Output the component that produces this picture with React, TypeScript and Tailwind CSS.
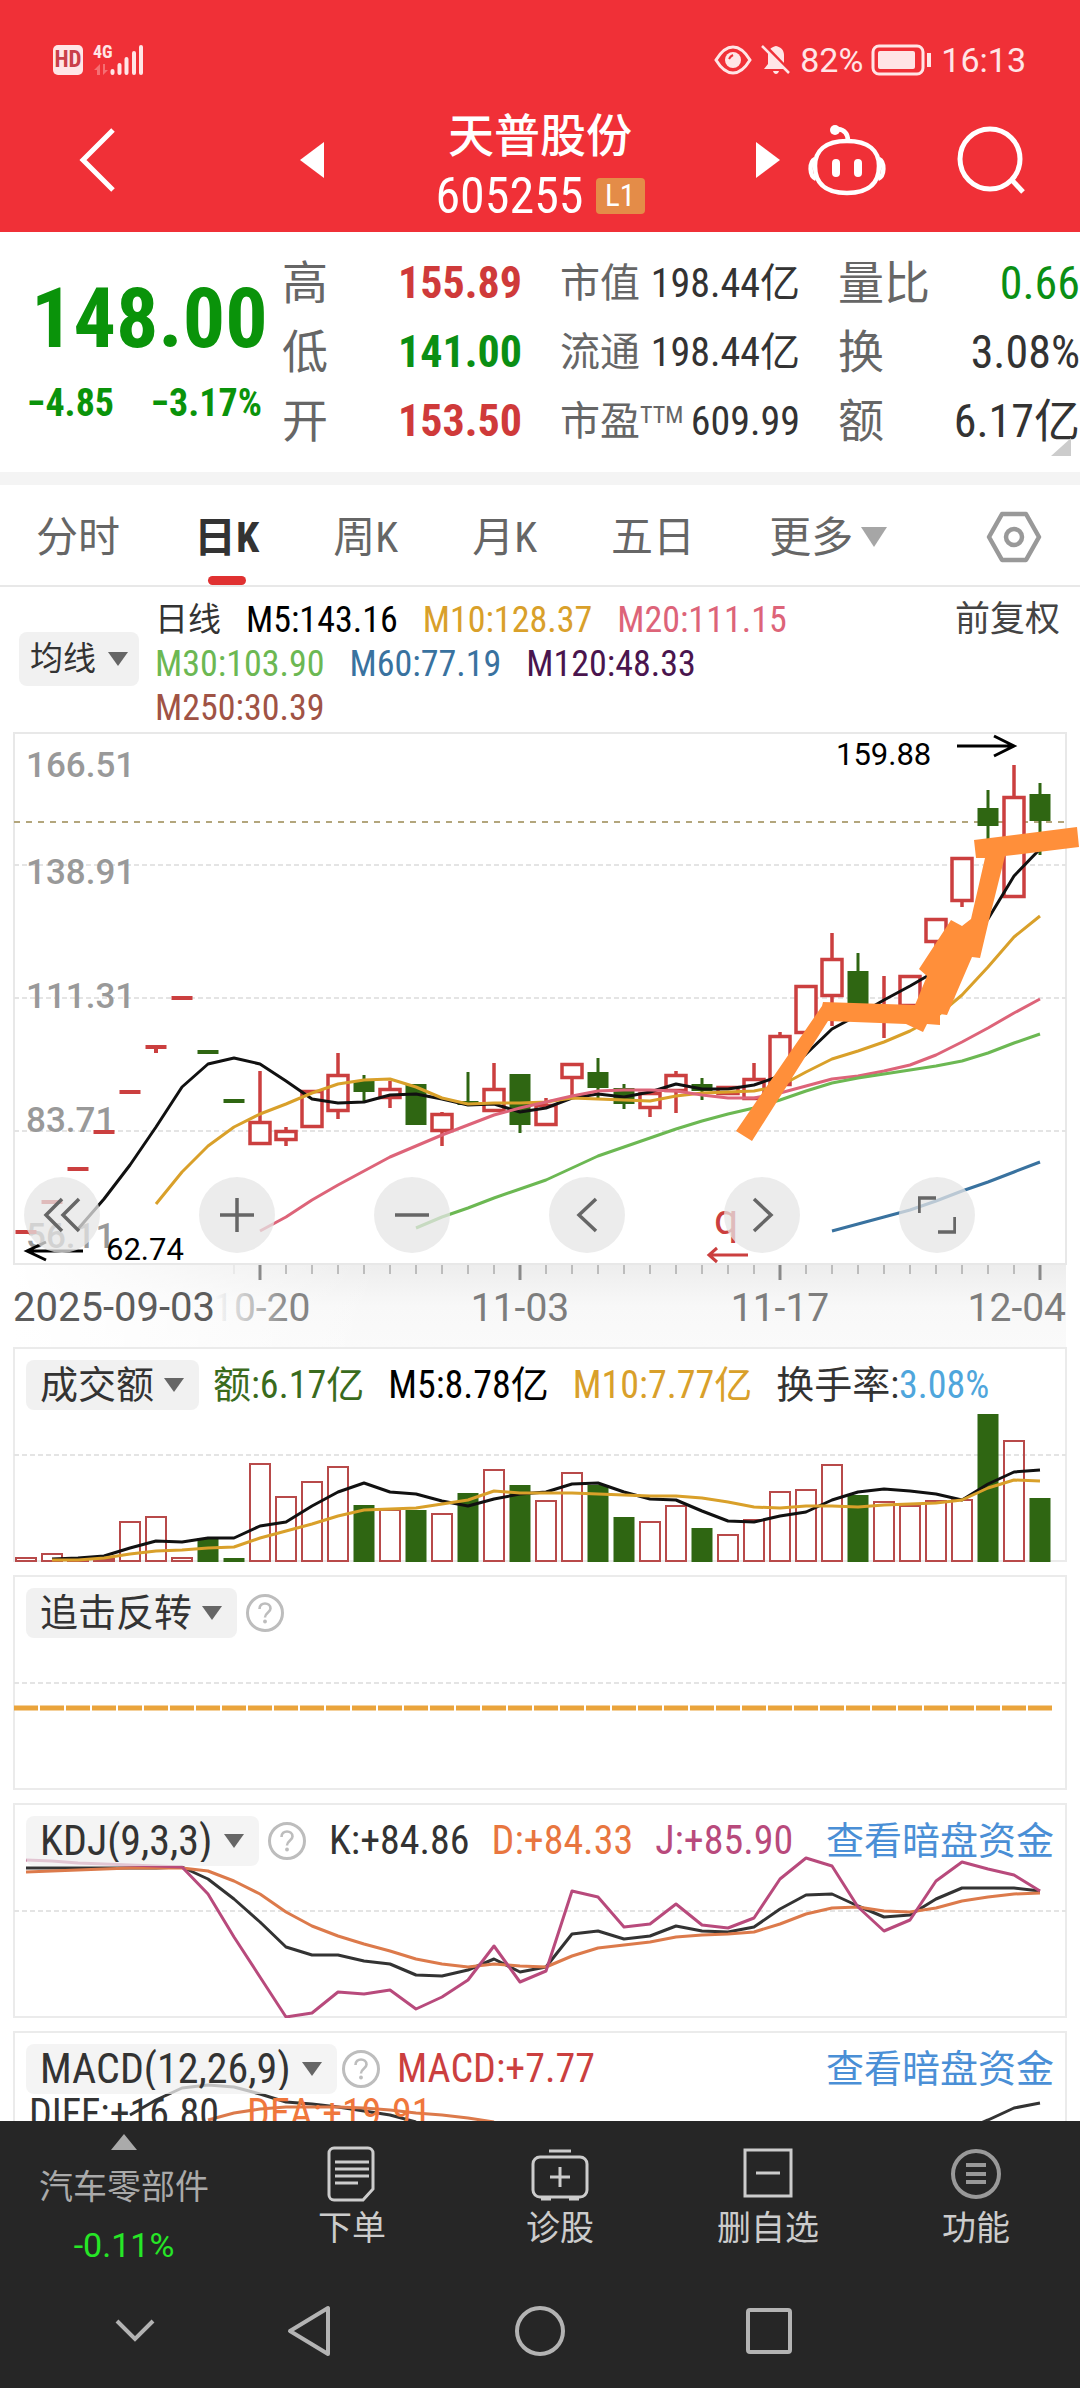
import type { ReactNode } from 'react';

const RED = '#cb3f3f';
const GREEN = '#2f6612';
const STEP = 26;

const at = (i: number) => STEP + i * STEP;

// [up, high, bodyTop, bodyBottom, low]
type Candle = [boolean, number, number, number, number];

const candles: Candle[] = [
  [true, 502, 502, 502, 502],
  [true, 472, 472, 472, 472],
  [true, 439, 439, 439, 439],
  [true, 402, 402, 402, 402],
  [true, 362, 362, 362, 362],
  [true, 317, 317, 317, 323],
  [true, 268, 268, 268, 268],
  [false, 322, 322, 322, 322],
  [false, 371, 371, 371, 371],
  [true, 341, 391, 415, 415],
  [true, 397, 400, 411, 416],
  [true, 360, 360, 398, 398],
  [true, 323, 344, 382, 389],
  [false, 345, 351, 362, 371],
  [true, 351, 358, 369, 378],
  [false, 354, 354, 395, 395],
  [true, 382, 383, 402, 416],
  [false, 342, 371, 375, 375],
  [true, 333, 358, 382, 382],
  [false, 344, 344, 395, 403],
  [true, 368, 374, 396, 396],
  [true, 333, 333, 349, 366],
  [false, 328, 342, 358, 368],
  [false, 354, 358, 374, 379],
  [true, 362, 362, 379, 387],
  [true, 341, 344, 362, 383],
  [false, 348, 354, 361, 370],
  [true, 356, 356, 365, 365],
  [true, 333, 348, 370, 370],
  [true, 302, 305, 356, 356],
  [true, 255, 255, 304, 304],
  [true, 203, 228, 267, 296],
  [false, 223, 241, 275, 275],
  [true, 246, 281, 285, 308],
  [true, 245, 245, 277, 277],
  [true, 188, 188, 213, 221],
  [true, 127, 127, 172, 177],
  [false, 60, 78, 96, 111],
  [true, 35, 66, 168, 168],
  [false, 53, 64, 91, 125],
];

const ma5 = [499, 469, 435, 397, 357, 334, 328, 334, 351, 369, 373, 372, 365, 364, 369, 375, 374, 382, 378, 368, 364, 367, 362, 354, 359, 359, 355, 346, 324, 299, 285, 270, 256, 241, 221, 189, 146, 119];
const ma10 = [474, 442, 416, 397, 384, 374, 363, 354, 350, 349, 357, 368, 374, 373, 373, 372, 368, 369, 370, 371, 366, 363, 362, 361, 356, 342, 329, 321, 312, 301, 287, 265, 237, 207, 186];
const ma20 = [501, 487, 470, 455, 441, 427, 416, 405, 395, 385, 378, 372, 366, 361, 360, 360, 361, 365, 368, 368, 363, 356, 349, 346, 341, 335, 325, 312, 298, 283, 269];
const ma30 = [498, 487, 478, 468, 459, 450, 438, 426, 417, 408, 399, 391, 384, 378, 370, 361, 353, 348, 344, 340, 336, 331, 323, 313, 304];
const ma60 = [501, 494, 487, 480, 471, 461, 452, 442, 432];

const volumes = [211, 207, 213, 212, 175, 170, 211, 191, 211, 117, 150, 135, 120, 158, 163, 163, 167, 146, 123, 138, 154, 126, 138, 170, 175, 159, 181, 188, 173, 145, 143, 118, 148, 155, 159, 154, 153, 67, 94, 151];
const vol5 = [212, 211, 209, 201, 194, 195, 191, 191, 179, 175, 159, 145, 136, 145, 147, 154, 159, 152, 147, 145, 137, 136, 145, 152, 153, 164, 174, 175, 169, 165, 153, 145, 142, 144, 147, 153, 137, 125, 123];
const vol10 = [213, 213, 211, 207, 204, 203, 201, 200, 191, 184, 177, 169, 163, 162, 161, 157, 153, 144, 146, 146, 146, 147, 148, 149, 149, 151, 155, 160, 161, 159, 159, 160, 158, 157, 156, 153, 141, 133, 134];

const kLine = [65, 65, 65, 65, 65, 65, 64, 76, 96, 119, 144, 152, 152, 158, 161, 172, 173, 167, 156, 169, 164, 131, 128, 136, 133, 123, 128, 129, 124, 106, 92, 91, 103, 114, 112, 96, 85, 85, 85, 88];
const dLine = [69, 68, 67, 66, 65, 65, 65, 68, 78, 91, 109, 123, 133, 141, 148, 156, 161, 164, 161, 163, 164, 153, 145, 142, 139, 134, 132, 131, 129, 121, 111, 105, 104, 108, 109, 105, 98, 94, 91, 90];
const jLine = [57, 58, 60, 61, 62, 63, 64, 91, 134, 174, 214, 210, 189, 191, 187, 206, 194, 177, 143, 179, 168, 88, 94, 124, 121, 101, 122, 125, 115, 76, 55, 63, 104, 128, 117, 78, 59, 66, 72, 88];

const diffLine = [84, 69, 57, 54, 56, 63, 71, 73, 76, 80, 84, 91];
const diffTail = [100, 89, 77, 72];
const deaLine = [89, 82, 78, 76, 76, 76, 77, 79, 82, 84, 87, 91];

const Line = ({ data, from, color }: { data: number[]; from: number; color: string }) => (
  <polyline
    points={data.map((y, i) => `${at(from + i)},${y}`).join(' ')}
    fill="none"
    stroke={color}
    strokeWidth="3"
    strokeLinejoin="round"
  />
);

const GridLine = ({ y }: { y: number }) => (
  <line x1="14" x2="1066" y1={y} y2={y} stroke="#e4e4e4" strokeWidth="2" strokeDasharray="5 3" />
);

const PickerPill = ({ label, value, size }: { label: string; value: string; size: 'main' | 'sub' | 'formula' }) => (
  <label
    className={
      size === 'main'
        ? 'flex h-[54px] items-center gap-3 rounded-lg bg-[#f1f1f1] px-[11px] text-[33px]'
        : size === 'sub'
          ? 'flex h-[50px] items-center gap-[9px] rounded-lg bg-[#f0f0f0]/90 pr-[15px] pl-[14px] text-[38px]'
          : 'flex h-[50px] items-center gap-[11px] rounded-lg bg-[#f0f0f0]/75 pr-[15px] pl-[14px] text-[42px]'
    }
  >
    <select aria-label={label} className="appearance-none bg-transparent leading-none text-[#333] outline-none">
      <option>{value}</option>
    </select>
    <svg viewBox="0 0 20 14" className="h-[14px] w-5 shrink-0">
      <path d="M0 0h20L10 14z" fill="#666" />
    </svg>
  </label>
);

const HelpButton = () => (
  <button aria-label="说明" className="shrink-0">
    <svg viewBox="0 0 40 40" className="size-10" fill="none" stroke="#bdbdbd" strokeWidth="3">
      <circle cx="20" cy="20" r="17.500" />
      <path d="M14.500 16c0-7.500 11-7 11-.5 0 4-5.500 4-5.500 9" strokeWidth="2.600" />
      <circle cx="20" cy="28.500" r="1.900" fill="#bdbdbd" stroke="none" />
    </svg>
  </button>
);

const FundLink = () => (
  <a href="#fund" className="ml-auto text-[38px] text-[#4a8fd6]">
    查看暗盘资金
  </a>
);

const Panel = ({ chart, children, clipped }: { chart: ReactNode; children: ReactNode; clipped?: boolean }) => (
  <section className={clipped ? 'relative h-[90px] overflow-hidden' : 'relative mb-[13px] h-[215px]'}>
    <svg viewBox="0 0 1080 215" preserveAspectRatio="none" className="absolute inset-x-0 top-0 h-[215px] w-full">
      <rect x="14" y="1" width="1052" height="213" fill="none" stroke="#ebebeb" strokeWidth="2" />
      {chart}
    </svg>
    <div className="relative px-[26px] pt-[13px]">{children}</div>
  </section>
);

const StatusBar = () => (
  <div className="flex h-[120px] items-center justify-between pr-[54px] pl-[53px] font-[Roboto] text-[34px] text-[#ffe5e6]">
    <div className="flex items-center gap-[10px] font-['Roboto_Condensed',Roboto,sans-serif]">
      <span className="flex size-[30px] items-center justify-center rounded-[5px] bg-[#ffe5e6] text-[23px] font-bold text-[#c9404a]">
        HD
      </span>
      <svg viewBox="0 0 52 32" className="h-8 w-[52px] overflow-visible" fill="#ffe5e6">
        <text x="0" y="14" fontSize="18" fontWeight="700">
          4G
        </text>
        <path d="M7 20l-6 6h3v5h3zM10 20v11l5-5h-3v-6z" opacity=".35" />
        <path
          d="M19.500 27v2M26.500 21v8M33.500 15v14M41 9v20M48 3v26"
          stroke="#ffe5e6"
          strokeWidth="4"
          strokeLinecap="round"
        />
      </svg>
    </div>
    <div className="flex items-center gap-2">
      <svg viewBox="0 0 38 30" className="h-[30px] w-[38px]" fill="none" stroke="#ffe5e6" strokeWidth="3">
        <path d="M2 15C8 5 14 2 19 2s11 3 17 13c-6 10-12 13-17 13S8 25 2 15z" />
        <circle cx="19" cy="15" r="8" fill="#ffe5e6" stroke="none" />
        <path d="M15 14c1-2 2-3 4-4" stroke="#ee3038" strokeWidth="2" />
      </svg>
      <svg viewBox="0 0 32 32" className="size-8" fill="#ffe5e6">
        <path d="M16 2c5 1 8 4 8 9v9l4 5H4l4-5v-9c0-5 3-8 8-9zM13 27h6c-1 4-5 4-6 0z" />
        <path d="M3 0l28 29" stroke="#ee3038" strokeWidth="4" />
        <path d="M2 2l27 27" stroke="#ffe5e6" strokeWidth="2.500" />
      </svg>
      <span>82%</span>
      <svg viewBox="0 0 62 32" className="h-8 w-[62px]" fill="none" stroke="#ffe5e6" strokeWidth="3">
        <rect x="2" y="2" width="50" height="28" rx="6" />
        <rect x="7" y="7" width="37" height="18" rx="2" fill="#ffe5e6" stroke="none" />
        <path d="M58 9v14" strokeWidth="4" />
      </svg>
      <span>16:13</span>
    </div>
  </div>
);

const Header = () => (
  <header className="bg-[#f03037] text-white">
    <StatusBar />
    <div className="grid h-[112px] grid-cols-[1fr_432px_1fr] items-start">
      <div className="flex h-20 items-center justify-between pl-[79px]">
        <button aria-label="返回">
          <svg viewBox="0 0 36 64" className="h-16 w-9" fill="none" stroke="#fff" strokeWidth="5">
            <path d="M34 2L4 32l30 30" />
          </svg>
        </button>
        <button aria-label="上一只">
          <svg viewBox="0 0 24 36" className="h-9 w-6" fill="#fff">
            <path d="M24 0v36L0 18z" />
          </svg>
        </button>
      </div>
      <div className="flex flex-col items-center">
        <h1 className="-mt-2 text-[46px] leading-[48px] font-medium">天普股份</h1>
        <div className="mt-4 flex items-center gap-3">
          <span className="text-[50px] leading-10">605255</span>
          <span className="flex h-9 w-[49px] items-center justify-center rounded bg-[#e48c48] text-[31px]">L1</span>
        </div>
      </div>
      <div className="flex h-20 items-center pr-[55px]">
        <button aria-label="下一只">
          <svg viewBox="0 0 24 36" className="h-9 w-6" fill="#fff">
            <path d="M0 0v36l24-18z" />
          </svg>
        </button>
        <button aria-label="智能助手" className="ml-7">
          <svg viewBox="0 0 78 72" className="h-[72px] w-[78px]" fill="none" stroke="#fff" strokeWidth="4.500">
            <path d="M39 17c22 0 32 10 32 25s-8 27-32 27S7 57 7 42s10-25 32-25z" />
            <path d="M7 35c-6 3-6 17 1 20M71 35c6 3 6 17-1 20M40 17c0-7-3-11-10-12" />
            <circle cx="27" cy="6" r="5" fill="#fff" stroke="none" />
            <path d="M28 39v10M50 39v10" strokeWidth="8" strokeLinecap="round" />
          </svg>
        </button>
        <button aria-label="搜索" className="ml-auto">
          <svg viewBox="0 0 68 68" className="size-[68px]" fill="none" stroke="#fff" strokeWidth="5">
            <circle cx="33" cy="33" r="30" />
            <path d="M54 53l12 13" />
          </svg>
        </button>
      </div>
    </div>
  </header>
);

const Stat = ({ label, value, color }: { label: ReactNode; value: string; color?: string }) => (
  <div className="flex justify-between">
    <dt className="text-[#666]">{label}</dt>
    <dd className={color}>{value}</dd>
  </div>
);

const Quote = () => (
  <section className="relative grid h-[240px] grid-cols-[282px_240px_1fr_242px] items-start pt-[17px] text-[46px] leading-[69px] whitespace-nowrap text-[#333]">
    <div className="font-bold text-[#0a930a]">
      <p className="pt-5 pl-[31px] text-[84px] leading-[100px]">148.00</p>
      <p className="flex justify-between pr-5 pl-[27px] text-[38px] leading-[68px]">
        <span>−4.85</span>
        <span>−3.17%</span>
      </p>
    </div>
    <dl className="[&_dd]:text-[44px] [&_dd]:font-bold">
      <Stat label="高" value="155.89" color="text-[#cf3a3a]" />
      <Stat label="低" value="141.00" color="text-[#0a8f14]" />
      <Stat label="开" value="153.50" color="text-[#cf3a3a]" />
    </dl>
    <dl className="px-[38px] text-[40px]">
      <Stat label="市值" value="198.44亿" />
      <Stat label="流通" value="198.44亿" />
      <Stat
        label={
          <>
            市盈<sup className="text-[24px] leading-none">TTM</sup>
          </>
        }
        value="609.99"
      />
    </dl>
    <dl>
      <Stat label="量比" value="0.66" color="text-[#0a8f14]" />
      <Stat label="换" value="3.08%" />
      <Stat label="额" value="6.17亿" />
    </dl>
    <svg viewBox="0 0 20 18" className="absolute right-[9px] bottom-4 h-[18px] w-5">
      <path d="M20 0v18H0z" fill="#ccc" />
    </svg>
  </section>
);

const Tabs = () => (
  <nav className="flex h-[102px] items-center gap-[74px] border-b-2 border-[#e8e8e8] pr-[38px] pl-9 text-[42px] text-[#666] [&>button]:pt-1">
    <button>分时</button>
    <button className="relative h-full font-bold text-[#333]">
      日K
      <span className="absolute bottom-0 left-1/2 h-[9px] w-[38px] -translate-x-1/2 rounded-full bg-[#e03131]" />
    </button>
    <button>周K</button>
    <button>月K</button>
    <button>五日</button>
    <button className="flex items-center gap-2">
      更多
      <svg viewBox="0 0 26 20" className="h-5 w-[26px]">
        <path d="M0 0h26L13 20z" fill="#a6a6a6" />
      </svg>
    </button>
    <button aria-label="设置" className="ml-auto">
      <svg viewBox="0 0 56 52" className="h-[52px] w-14" fill="none" stroke="#999" strokeWidth="4.500">
        <path d="M16 3h24l13 23-13 23H16L3 26z" strokeLinejoin="round" />
        <circle cx="28" cy="26" r="8" />
      </svg>
    </button>
  </nav>
);

const Averages = () => (
  <section className="flex h-[143px] items-center pr-5 pl-[19px]">
    <PickerPill size="main" label="主图指标" value="均线" />
    <div className="ml-4 flex max-w-[680px] flex-1 flex-wrap gap-x-[25px] self-start pt-[11px] text-[36px] leading-[44px]">
      <span className="text-[33px] text-[#333]">日线</span>
      <span className="text-black">M5:143.16</span>
      <span className="text-[#d9a02a]">M10:128.37</span>
      <span className="text-[#dd6479]">M20:111.15</span>
      <span className="text-[#6cb853]">M30:103.90</span>
      <span className="text-[#39729f]">M60:77.19</span>
      <span className="text-[#4a154e]">M120:48.33</span>
      <span className="text-[#a05345]">M250:30.39</span>
    </div>
    <button className="ml-auto self-start pt-[11px] text-[35px] leading-[44px] text-[#444]">前复权</button>
  </section>
);

const chartButtons = [
  { name: '最左', path: 'M19 3L3 19l16 16M36 3L20 19l16 16' },
  { name: '放大', path: 'M2 19h34M19 2v34' },
  { name: '缩小', path: 'M2 19h34' },
  { name: '左移', path: 'M28 3L11 19l17 16' },
  { name: '右移', path: 'M11 3l17 16-17 16' },
  { name: '全屏', path: 'M1 17V2h17M37 21v15H20' },
];

const axisDates = [
  { label: '11-03', i: 19 },
  { label: '11-17', i: 29 },
];

const PriceChart = () => (
  <section className="relative h-[617px]">
    <svg viewBox="0 0 1080 617" preserveAspectRatio="none" className="h-[617px] w-full font-[Roboto]">
      <defs>
        <linearGradient id="axisDown" x1="0" y1="0" x2="0" y2="1">
          <stop offset="0" stopColor="#ededed" />
          <stop offset=".5" stopColor="#f8f8f8" />
          <stop offset="1" stopColor="#fafafa" />
        </linearGradient>
        <linearGradient id="axisFade" x1="0" y1="0" x2="1" y2="0">
          <stop offset="0" stopColor="#fff" />
          <stop offset=".35" stopColor="#fff" stopOpacity="0" />
        </linearGradient>
        <linearGradient id="dateFade" gradientUnits="userSpaceOnUse" x1="215" y1="0" x2="290" y2="0">
          <stop offset="0" stopColor="#858585" stopOpacity="0" />
          <stop offset="1" stopColor="#858585" />
        </linearGradient>
      </defs>

      {/* Date axis */}
      <rect x="14" y="535" width="1052" height="82" fill="url(#axisDown)" />
      <rect x="14" y="535" width="1052" height="82" fill="url(#axisFade)" />
      {candles.slice(8).map((_, n) => {
        const i = n + 8;
        const major = i % 10 === 9;
        return (
          <line
            key={i}
            x1={at(i)}
            x2={at(i)}
            y1="535"
            y2={major ? 550 : 544}
            stroke={i === 8 ? '#ddd' : '#8a8a8a'}
            strokeWidth={major ? 3 : 1}
          />
        );
      })}
      <g fontSize="39">
        <text x="13" y="591" fill="#5c5c5c" fontSize="40">
          2025-09-03
        </text>
        <text x="212" y="591" fill="url(#dateFade)">
          10-20
        </text>
        {axisDates.map((d) => (
          <text key={d.label} x={at(d.i)} y="591" fill="#7d7d7d" textAnchor="middle">
            {d.label}
          </text>
        ))}
        <text x="1066" y="591" fill="#7d7d7d" textAnchor="end">
          12-04
        </text>
      </g>

      {/* Frame and price grid */}
      <rect x="14" y="3" width="1052" height="531" fill="none" stroke="#e8e8e8" strokeWidth="2" />
      <GridLine y={135} />
      <GridLine y={268} />
      <GridLine y={401} />
      <line x1="14" x2="1066" y1="92" y2="92" stroke="#b3a67c" strokeWidth="2" strokeDasharray="6 6" />
      <g fontSize="35" fontWeight="500" fill="#999">
        <text x="26" y="47">166.51</text>
        <text x="26" y="154">138.91</text>
        <text x="26" y="278">111.31</text>
        <text x="26" y="402">83.71</text>
        <text x="26" y="518">56.11</text>
      </g>

      {candles.map(([up, high, top, bottom, low], i) => {
        const x = at(i);
        if (top === bottom) {
          return (
            <g key={i} stroke={up ? RED : GREEN} strokeWidth="4">
              <path d={`M${x - 10.5} ${top}h21`} />
              {low > bottom && <path d={`M${x} ${bottom}V${low}`} />}
            </g>
          );
        }
        return (
          <g key={i} stroke={up ? RED : GREEN} strokeWidth={up ? 3.5 : 3}>
            <path d={`M${x} ${high}V${top}M${x} ${bottom}V${low}`} />
            {up ? (
              <rect x={x - 10} y={top + 1.5} width="20" height={Math.max(bottom - top - 3, 1)} fill="#fff" />
            ) : (
              <rect x={x - 10.5} y={top} width="21" height={bottom - top} fill={GREEN} stroke="none" />
            )}
          </g>
        );
      })}

      <Line data={ma5} from={2} color="#111" />
      <Line data={ma10} from={5} color="#d9a02a" />
      <Line data={ma20} from={9} color="#dd6479" />
      <Line data={ma30} from={15} color="#6cb853" />
      <Line data={ma60} from={31} color="#39729f" />

      {/* Extremes and event mark */}
      <g stroke="#000" strokeWidth="3" fill="none">
        <path d="M957 16h56M994 6l20 10-20 10" />
        <path d="M83 521H27M46 512l-19 9 19 9" />
      </g>
      <g fontSize="31">
        <text x="836" y="35">159.88</text>
        <text x="106" y="530">62.74</text>
      </g>
      <text x="714" y="504" fontSize="43" fill={RED}>
        q
      </text>
      <path d="M748 525h-39M717 518l-8 7 8 7" stroke={RED} strokeWidth="3" fill="none" />

      {/* Hand-drawn trend marker */}
      <path
        fill="#ff8f3a"
        d="M736 401L822 276L823 272L915 275L927 246L919 239L951 190L962 196L971 189L985 128L976 128L974 110L1077 97L1079 117L1005 126L989 190L980 228L972 227L947 285L940 284L940 295L927 294L923 302L906 294L828 291L752 411Z"
      />
    </svg>

    <div className="absolute inset-x-6 top-[447px] flex justify-between pr-[81px]">
      {chartButtons.map((b) => (
        <button
          key={b.name}
          aria-label={b.name}
          className="flex size-[76px] items-center justify-center rounded-full bg-[#e6e6e6]/75"
        >
          <svg viewBox="0 0 38 38" className="size-[38px]" fill="none" stroke="#666" strokeWidth="3.500">
            <path d={b.path} />
          </svg>
        </button>
      ))}
    </div>
  </section>
);

const VolumePanel = () => (
  <Panel
    chart={
      <>
        <GridLine y={108} />
        {volumes.map((top, i) =>
          candles[i][0] ? (
            <rect key={i} x={at(i) - 10} y={top} width="20" height={214 - top} fill="none" stroke="#b84a4a" strokeWidth="2" />
          ) : (
            <rect key={i} x={at(i) - 10.5} y={top} width="21" height={215 - top} fill={GREEN} />
          ),
        )}
        <Line data={vol5} from={1} color="#111" />
        <Line data={vol10} from={1} color="#d9a02a" />
      </>
    }
  >
    <div className="flex h-[50px] items-center text-[38px] text-[#333]">
      <PickerPill size="sub" label="副图指标" value="成交额" />
      <div className="ml-[14px] flex gap-[24px]">
        <span className="text-[#3a6b1d]">额:6.17亿</span>
        <span className="text-black">M5:8.78亿</span>
        <span className="text-[#d9a02a]">M10:7.77亿</span>
        <span>
          换手率:<span className="text-[#4fa6dc]">3.08%</span>
        </span>
      </div>
    </div>
  </Panel>
);

const ReversalPanel = () => (
  <Panel
    chart={
      <>
        <GridLine y={108} />
        <line x1="14" x2="1052" y1="133" y2="133" stroke="#eaa43c" strokeWidth="5" strokeDasharray="24 2" />
      </>
    }
  >
    <div className="flex h-[50px] items-center gap-2">
      <PickerPill size="sub" label="副图指标" value="追击反转" />
      <HelpButton />
    </div>
  </Panel>
);

const KdjPanel = () => (
  <Panel
    chart={
      <>
        <GridLine y={108} />
        <Line data={kLine} from={0} color="#333" />
        <Line data={dLine} from={0} color="#dc7a4b" />
        <Line data={jLine} from={0} color="#b84a7c" />
      </>
    }
  >
    <div className="flex h-[50px] items-center text-[40px]">
      <PickerPill size="formula" label="副图指标" value="KDJ(9,3,3)" />
      <div className="ml-2 flex items-center gap-[22px]">
        <HelpButton />
        <span className="text-[#333]">K:+84.86</span>
        <span className="text-[#e8763f]">D:+84.33</span>
        <span className="text-[#b84a7c]">J:+85.90</span>
      </div>
      <FundLink />
    </div>
  </Panel>
);

const MacdPanel = () => (
  <Panel
    clipped
    chart={
      <>
        <Line data={diffLine} from={4} color="#333" />
        <Line data={deaLine} from={7} color="#dc7a4b" />
        <Line data={diffTail} from={36} color="#333" />
      </>
    }
  >
    <div className="flex h-[50px] items-center text-[40px]">
      <PickerPill size="formula" label="副图指标" value="MACD(12,26,9)" />
      <div className="ml-1 flex items-center gap-4">
        <HelpButton />
        <span className="text-[#cb3f3f]">MACD:+7.77</span>
      </div>
      <FundLink />
    </div>
    <div className="flex gap-7 pl-[3px] text-[40px] leading-[40px]">
      <span className="text-[#333]">DIFF:+16.80</span>
      <span className="text-[#f0773c]">DEA:+19.91</span>
    </div>
  </Panel>
);

const actions = [
  {
    label: '下单',
    icon: (
      <g>
        <path d="M10 3h34a5 5 0 0 1 5 5v36l-10 11H10a5 5 0 0 1-5-5V8a5 5 0 0 1 5-5z" />
        <path d="M11 17h34M11 24h34M11 31h34M11 38h23" />
      </g>
    ),
  },
  {
    label: '诊股',
    icon: (
      <g>
        <rect x="1" y="12" width="54" height="40" rx="7" />
        <path d="M17 6h22M28 22v20M18 32h20M9 54h10M37 54h10" />
      </g>
    ),
  },
  {
    label: '删自选',
    icon: (
      <g>
        <rect x="5" y="5" width="46" height="46" />
        <path d="M16 28h24" />
      </g>
    ),
  },
  {
    label: '功能',
    icon: (
      <g stroke="#999" strokeWidth="4">
        <circle cx="28" cy="29" r="23" />
        <path d="M18 20h20M18 29h20M18 37h20" />
      </g>
    ),
  },
];

const BottomBar = () => (
  <footer className="bg-[#262626] text-[#ccc]">
    <div className="grid h-[160px] grid-cols-[248px_repeat(4,1fr)] text-[34px]">
      <a href="#sector" className="flex flex-col items-center pt-[13px]">
        <svg viewBox="0 0 26 16" className="h-4 w-[26px]">
          <path d="M13 0l13 16H0z" fill="#aaa" />
        </svg>
        <span className="mt-2 leading-[58px] text-[#aaa]">汽车零部件</span>
        <span className="font-[Roboto] leading-[58px] text-[#26e626]">-0.11%</span>
      </a>
      {actions.map((a) => (
        <button key={a.label} className="flex flex-col items-center pt-6">
          <svg viewBox="0 0 56 58" className="h-[58px] w-14 overflow-visible" fill="none" stroke="#ccc" strokeWidth="3">
            {a.icon}
          </svg>
          <span className="leading-[50px]">{a.label}</span>
        </button>
      ))}
    </div>
    <div className="flex h-[107px] items-center pb-[7px] pl-[115px]">
      <button aria-label="收起">
        <svg viewBox="0 0 40 24" className="h-6 w-10" fill="none" stroke="#b3b3b3" strokeWidth="4">
          <path d="M2 2l18 18L38 2" />
        </svg>
      </button>
      <button aria-label="后退" className="ml-[132px]">
        <svg viewBox="0 0 44 52" className="h-[52px] w-11" fill="none" stroke="#b3b3b3" strokeWidth="4" strokeLinejoin="round">
          <path d="M41 3v46L3 26z" />
        </svg>
      </button>
      <button aria-label="主页" className="ml-[184px]">
        <svg viewBox="0 0 50 50" className="size-[50px]" fill="none" stroke="#b3b3b3" strokeWidth="4">
          <circle cx="25" cy="25" r="23" />
        </svg>
      </button>
      <button aria-label="最近任务" className="ml-[181px]">
        <svg viewBox="0 0 46 46" className="size-[46px]" fill="none" stroke="#b3b3b3" strokeWidth="4">
          <rect x="2" y="2" width="42" height="42" rx="2" />
        </svg>
      </button>
    </div>
  </footer>
);

export default function App() {
  return (
    <div className="w-full overflow-hidden bg-white font-['Liberation_Sans_Narrow','Roboto_Condensed',Roboto,'Noto_Sans_CJK_SC',sans-serif]">
      <Header />
      <main>
        <Quote />
        <div className="h-[13px] bg-[#f4f4f4]" />
        <Tabs />
        <Averages />
        <PriceChart />
        <VolumePanel />
        <ReversalPanel />
        <KdjPanel />
        <MacdPanel />
      </main>
      <BottomBar />
    </div>
  );
}
